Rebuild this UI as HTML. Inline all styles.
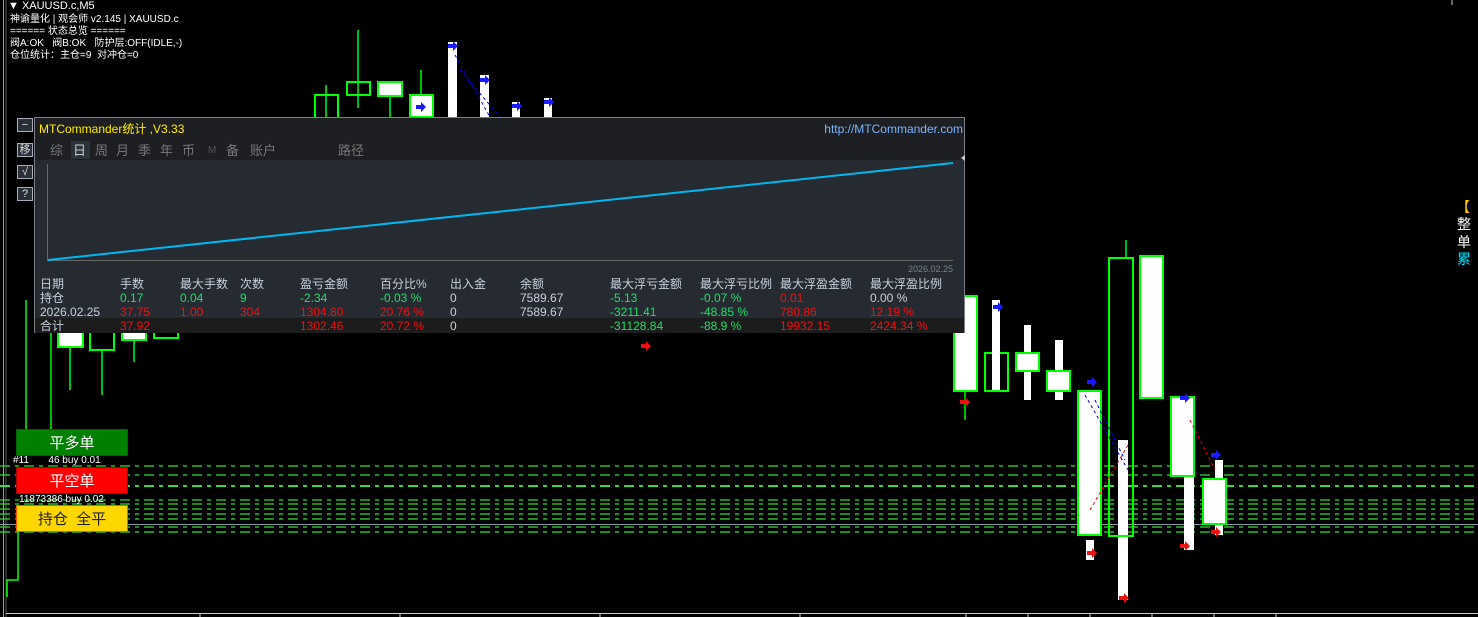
<!DOCTYPE html>
<html><head><meta charset="utf-8"><style>
*{margin:0;padding:0;box-sizing:border-box}
body{width:1478px;height:617px;background:#000;position:relative;overflow:hidden;font-family:"Liberation Sans","Noto Sans CJK SC",sans-serif;color:#fff}
.t{position:absolute;white-space:nowrap;font-size:10px;line-height:12px}
#panel{position:absolute;left:34px;top:117px;width:931px;height:216px;border:1px solid #7a7f88;background:#262b32}
#panel .bar{position:absolute;left:0;top:0;width:100%;height:42px;background:#1e1f22}
#panel .c{position:absolute;white-space:nowrap;font-size:12px;line-height:14px}
#panel .tb{position:absolute;top:25px;font-size:13px;line-height:16px;color:#777}
.g{color:#22dd66}.r{color:#ee1111}.w{color:#c8d0dc}
.btn{position:absolute;left:16px;width:112px;height:27px;font-size:15px;text-align:center;line-height:27px}
.sb{position:absolute;left:17px;width:16px;height:14px;border:1px solid #aab;background:#2a3038;color:#ddd;font-size:11px;line-height:12px;text-align:center}
</style></head><body>
<svg width="1478" height="617" style="position:absolute;left:0;top:0">
<g stroke="#999" fill="none"><line x1="3.5" y1="0" x2="3.5" y2="617"/><line x1="6" y1="0" x2="6" y2="617" stroke="#555"/><line x1="6" y1="613.5" x2="1478" y2="613.5" stroke="#ccc"/></g>
<g stroke="#ccc"><line x1="200" y1="613" x2="200" y2="617"/><line x1="400" y1="613" x2="400" y2="617"/><line x1="600" y1="613" x2="600" y2="617"/><line x1="800" y1="613" x2="800" y2="617"/><line x1="966" y1="613" x2="966" y2="617"/><line x1="1028" y1="613" x2="1028" y2="617"/><line x1="1090" y1="613" x2="1090" y2="617"/><line x1="1152" y1="613" x2="1152" y2="617"/><line x1="1214" y1="613" x2="1214" y2="617"/><line x1="1276" y1="613" x2="1276" y2="617"/><line x1="1452" y1="0" x2="1452" y2="5"/></g>
<g stroke="#33dd33" stroke-width="1.2" stroke-dasharray="10,5,4,5" fill="none">
<line x1="0" y1="466" x2="1478" y2="466"/><line x1="0" y1="475" x2="1478" y2="475"/><line x1="0" y1="486" x2="1478" y2="486" stroke-width="2"/><line x1="0" y1="500" x2="1478" y2="500"/><line x1="0" y1="504" x2="1478" y2="504"/><line x1="0" y1="509" x2="1478" y2="509"/><line x1="0" y1="514" x2="1478" y2="514"/><line x1="0" y1="519" x2="1478" y2="519"/><line x1="0" y1="527" x2="1478" y2="527"/><line x1="0" y1="532" x2="1478" y2="532"/></g>
<line x1="0" y1="524.5" x2="1478" y2="524.5" stroke="#8899aa"/>
<g stroke="#00ff00" stroke-width="1.5" fill="none">
<polyline points="7,597 7,580 18,580 18,532"/><line x1="26" y1="300" x2="26" y2="430"/><line x1="51" y1="332" x2="51" y2="430"/>
<line x1="326" y1="85" x2="326" y2="118"/><line x1="358" y1="30" x2="358" y2="108"/><line x1="390" y1="96" x2="390" y2="118"/><line x1="421" y1="70" x2="421" y2="95"/>
<line x1="70" y1="347" x2="70" y2="390"/><line x1="102" y1="350" x2="102" y2="395"/><line x1="134" y1="340" x2="134" y2="362"/>
<line x1="965" y1="391" x2="965" y2="420"/><line x1="1126" y1="240" x2="1126" y2="258"/>
</g>
<g stroke="#00ff00" stroke-width="2" fill="none">
<rect x="315" y="95" width="23" height="23"/><rect x="347" y="82" width="23" height="13"/>
<rect x="90" y="332" width="24" height="18"/><rect x="154" y="332" width="24" height="6"/>
<rect x="985" y="353" width="23" height="38"/>
</g>
<g fill="#fff"><rect x="448" y="42" width="9" height="75"/><rect x="480" y="75" width="9" height="42"/><rect x="512" y="102" width="8" height="15"/><rect x="544" y="98" width="8" height="19"/>
<rect x="992" y="300" width="8" height="90"/><rect x="1024" y="325" width="7" height="75"/><rect x="1055" y="340" width="8" height="60"/><rect x="1086" y="540" width="8" height="20"/><rect x="1118" y="440" width="10" height="160"/><rect x="1184" y="470" width="10" height="80"/><rect x="1215" y="460" width="8" height="75"/></g>
<g stroke="#00ff00" stroke-width="2" fill="#fff">
<rect x="378" y="82" width="24" height="14"/><rect x="410" y="95" width="23" height="22"/>
<rect x="58" y="332" width="25" height="15"/><rect x="122" y="332" width="24" height="8"/>
<rect x="954" y="296" width="23" height="95"/><rect x="1016" y="353" width="23" height="18"/><rect x="1047" y="371" width="23" height="20"/><rect x="1078" y="391" width="23" height="144"/><rect x="1140" y="256" width="23" height="142"/><rect x="1171" y="397" width="23" height="79"/><rect x="1203" y="479" width="23" height="45"/>
</g>
<rect x="1109" y="258" width="24" height="278" stroke="#00ff00" stroke-width="2" fill="none"/>
<g stroke="#0000ee" stroke-width="1" stroke-dasharray="3,3"><line x1="455" y1="55" x2="490" y2="117"/><line x1="460" y1="70" x2="500" y2="117"/><line x1="1085" y1="395" x2="1128" y2="470"/><line x1="1095" y1="400" x2="1125" y2="460"/></g>
<g stroke="#ee0000" stroke-width="1" stroke-dasharray="3,3"><line x1="1090" y1="510" x2="1128" y2="445"/><line x1="1190" y1="420" x2="1215" y2="470"/></g>
<g fill="#1a1aff"><path d="M448 44h5v-3l5 5-5 5v-3h-5z"/><path d="M480 78h5v-3l5 5-5 5v-3h-5z"/><path d="M512 104h5v-3l5 5-5 5v-3h-5z"/><path d="M544 100h5v-3l5 5-5 5v-3h-5z"/><path d="M993 305h5v-3l5 5-5 5v-3h-5z"/><path d="M1087 380h5v-3l5 5-5 5v-3h-5z"/><path d="M1180 396h5v-3l5 5-5 5v-3h-5z"/><path d="M1211 453h5v-3l5 5-5 5v-3h-5z"/><path d="M416 105h5v-3l5 5-5 5v-3h-5z"/></g>
<g fill="#ee1111"><path d="M960 400h5v-3l5 5-5 5v-3h-5z"/><path d="M641 344h5v-3l5 5-5 5v-3h-5z"/><path d="M1087 551h5v-3l5 5-5 5v-3h-5z"/><path d="M1119 596h5v-3l5 5-5 5v-3h-5z"/><path d="M1180 544h5v-3l5 5-5 5v-3h-5z"/><path d="M1211 530h5v-3l5 5-5 5v-3h-5z"/></g>
</svg>

<div class="t" style="left:8px;top:0;font-size:11px;line-height:13px">▼ XAUUSD.c,M5</div>
<div class="t" style="left:10px;top:14px">神谕量化 | 观会师 v2.145 | XAUUSD.c</div>
<div class="t" style="left:10px;top:26px">====== 状态总览 ======</div>
<div class="t" style="left:10px;top:38px">阀A:OK &nbsp; 阀B:OK &nbsp; 防护层:OFF(IDLE,-)</div>
<div class="t" style="left:10px;top:50px">仓位统计：主仓=9 &nbsp;对冲仓=0</div>

<div class="sb" style="top:118px">−</div>
<div class="sb" style="top:143px">移</div>
<div class="sb" style="top:165px">√</div>
<div class="sb" style="top:187px">?</div>

<div id="panel">
<div class="bar"></div>
<div style="position:absolute;left:0;top:200px;width:100%;height:15px;background:#1c1c1d"></div>
<div class="c" style="left:4px;top:4px;color:#ffee00">MTCommander统计 ,V3.33</div>
<div class="c" style="right:1px;top:4px;color:#7ab4ff">http://MTCommander.com</div>
<div style="position:absolute;left:36px;top:23px;width:19px;height:18px;background:#2c333b"></div>
<div class="tb" style="left:15px">综</div><div class="tb" style="left:38px;color:#ccc">日</div><div class="tb" style="left:60px">周</div><div class="tb" style="left:81px">月</div><div class="tb" style="left:103px">季</div><div class="tb" style="left:125px">年</div><div class="tb" style="left:147px">币</div><div class="tb" style="left:173px;font-size:10px;color:#555">M</div><div class="tb" style="left:191px">备</div><div class="tb" style="left:215px">账户</div><div class="tb" style="left:303px">路径</div>
<div style="position:absolute;left:12px;top:46px;width:1px;height:97px;background:#666"></div>
<div style="position:absolute;left:12px;top:142px;width:906px;height:1px;background:#666"></div>
<svg width="931" height="216" style="position:absolute;left:0;top:0"><line x1="13" y1="142" x2="918" y2="45" stroke="#00b8f0" stroke-width="2"/><path d="M926 40l4 -3v6z" fill="#ccc"/></svg>
<div class="c" style="left:873px;top:144px;font-size:9px;color:#7a808a">2026.02.25</div>
<div class="c w" style="left:5px;top:159px">日期</div><div class="c w" style="left:85px;top:159px">手数</div><div class="c w" style="left:145px;top:159px">最大手数</div><div class="c w" style="left:205px;top:159px">次数</div><div class="c w" style="left:265px;top:159px">盈亏金额</div><div class="c w" style="left:345px;top:159px">百分比%</div><div class="c w" style="left:415px;top:159px">出入金</div><div class="c w" style="left:485px;top:159px">余额</div><div class="c w" style="left:575px;top:159px">最大浮亏金额</div><div class="c w" style="left:665px;top:159px">最大浮亏比例</div><div class="c w" style="left:745px;top:159px">最大浮盈金额</div><div class="c w" style="left:835px;top:159px">最大浮盈比例</div>
<div class="c w" style="left:5px;top:173px">持仓</div><div class="c g" style="left:85px;top:173px">0.17</div><div class="c g" style="left:145px;top:173px">0.04</div><div class="c g" style="left:205px;top:173px">9</div><div class="c g" style="left:265px;top:173px">-2.34</div><div class="c g" style="left:345px;top:173px">-0.03 %</div><div class="c w" style="left:415px;top:173px">0</div><div class="c w" style="left:485px;top:173px">7589.67</div><div class="c g" style="left:575px;top:173px">-5.13</div><div class="c g" style="left:665px;top:173px">-0.07 %</div><div class="c r" style="left:745px;top:173px">0.01</div><div class="c w" style="left:835px;top:173px">0.00 %</div>
<div class="c w" style="left:5px;top:187px">2026.02.25</div><div class="c r" style="left:85px;top:187px">37.75</div><div class="c r" style="left:145px;top:187px">1.00</div><div class="c r" style="left:205px;top:187px">304</div><div class="c r" style="left:265px;top:187px">1304.80</div><div class="c r" style="left:345px;top:187px">20.76 %</div><div class="c w" style="left:415px;top:187px">0</div><div class="c w" style="left:485px;top:187px">7589.67</div><div class="c g" style="left:575px;top:187px">-3211.41</div><div class="c g" style="left:665px;top:187px">-48.85 %</div><div class="c r" style="left:745px;top:187px">780.86</div><div class="c r" style="left:835px;top:187px">12.19 %</div>
<div class="c w" style="left:5px;top:201px">合计</div><div class="c r" style="left:85px;top:201px">37.92</div><div class="c r" style="left:265px;top:201px">1302.46</div><div class="c r" style="left:345px;top:201px">20.72 %</div><div class="c w" style="left:415px;top:201px">0</div><div class="c g" style="left:575px;top:201px">-31128.84</div><div class="c g" style="left:665px;top:201px">-88.9 %</div><div class="c r" style="left:745px;top:201px">19932.15</div><div class="c r" style="left:835px;top:201px">2424.34 %</div>
</div>

<div class="btn" style="top:429px;background:#008000;border:1px solid #006400;color:#fff">平多单</div>
<div class="t" style="left:13px;top:455px">#11 &nbsp; &nbsp; &nbsp; 46 buy 0.01</div>
<div class="btn" style="top:467px;background:#ff0000;border:1px solid #a00;color:#fff">平空单</div>
<div class="t" style="left:19px;top:494px">11873386 buy 0.02</div>
<div class="btn" style="top:505px;background:#ffd700;border:1px solid #ff5500;color:#222">持仓 &nbsp;全平</div>

<div class="t" style="left:1456px;top:199px;font-size:14px;line-height:16px;color:#ffcc00">【</div>
<div class="t" style="left:1457px;top:216px;font-size:14px;line-height:17px">整</div>
<div class="t" style="left:1457px;top:234px;font-size:14px;line-height:17px">单</div>
<div class="t" style="left:1457px;top:251px;font-size:14px;line-height:17px;color:#00e5ff">累</div>
</body></html>
